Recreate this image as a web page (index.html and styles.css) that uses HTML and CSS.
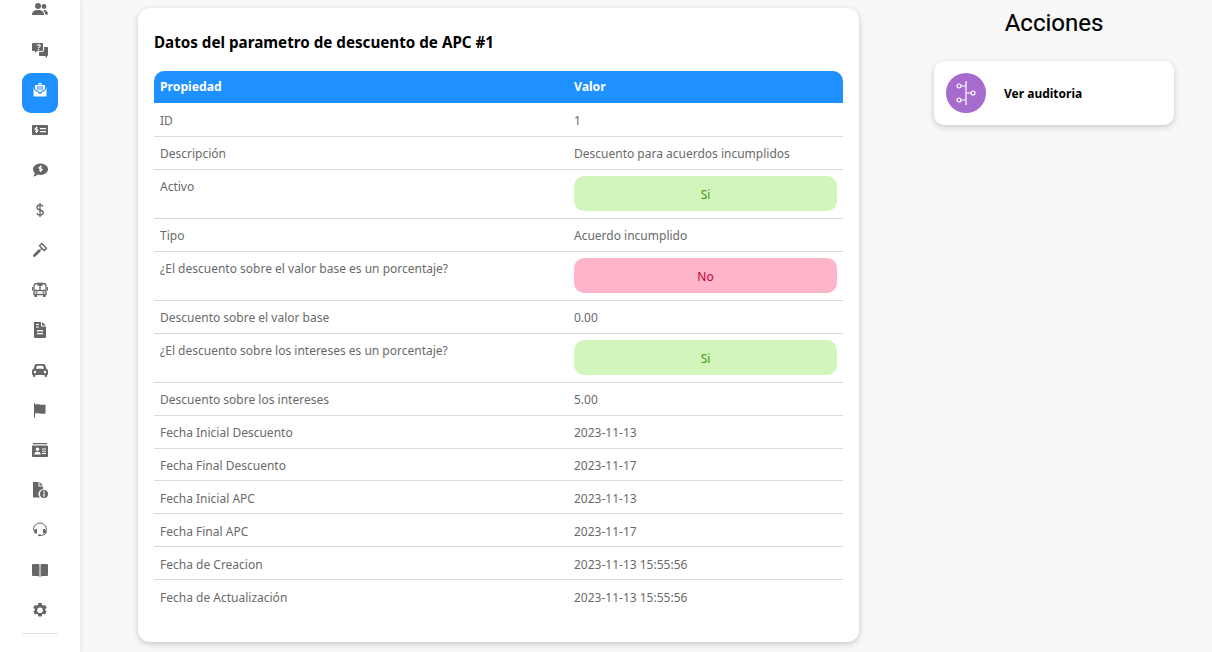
FILE: index.html
```html
<!DOCTYPE html>
<html lang="es">
<head>
    <meta charset="UTF-8">
    <meta name="viewport" content="width=device-width, initial-scale=1.0">
    <title>Parametro de descuento de APC</title>
    <link rel="stylesheet" href="styles.css">
</head>
<body>
    <div class="layout">
        <nav class="sidebar">
            <ul class="side-list">
                <li class="side-item"><svg viewBox="0 0 16 16"><circle cx="6" cy="4" r="3"/><circle cx="12" cy="4.500" r="2.400"/><path d="M0 13c0-3.500 2-5 6-5s6 1.500 6 5z"/><path d="M11 8c3-.5 5 1 5 4.500h-3c0-2-.7-3.500-2-4.500z"/></svg></li>
                <li class="side-item"><svg viewBox="0 0 16 16"><path fill-rule="evenodd" d="M1 1h9a1 1 0 0 1 1 1v6a1 1 0 0 1-1 1H5l-2 2V9H1a1 1 0 0 1-1-1V2a1 1 0 0 1 1-1zm3.500 2.800h1.200c0-.8 1.900-.9 1.800.1 0 .7-1.700 1-1.700 2.300h1.300c0-.9 1.800-1.200 1.700-2.700C8.700 1.600 4.500 1.700 4.500 3.800zM5.800 7v1.200h1.400V7z"/><path d="M12 5h3a1 1 0 0 1 1 1v7a1 1 0 0 1-1 1v2l-2-2H8a1 1 0 0 1-1-1v-3h3a2 2 0 0 0 2-2z"/></svg></li>
                <li class="side-item active"><svg viewBox="0 0 16 16"><path d="M8 .5l2.500 2h-5z"/><path d="M3 3h10v4L8 10.500 3 7z"/><path d="M1.500 6L2 5.600v2L8 12l6-4.400v-2l.5.4v7.500a1 1 0 0 1-1 1h-11a1 1 0 0 1-1-1z"/><path class="cut" d="M5 4.500h6v1H5zM5 6.500h6v1H5z"/></svg></li>
                <li class="side-item"><svg viewBox="0 0 16 16"><path fill-rule="evenodd" d="M1 3h14a1 1 0 0 1 1 1v8a1 1 0 0 1-1 1H1a1 1 0 0 1-1-1V4a1 1 0 0 1 1-1zm7 3v1.300h6V6zm0 3v1.300h6V9zM4 4.500v1c-2 .3-2 2.500-.2 2.800 1.200.2 1 1-.8.600v1l1 .2v1h1v-1c2-.4 1.800-2.600 0-2.900-1-.2-1-1 .8-.6v-1l-.8-.1v-1z"/></svg></li>
                <li class="side-item"><svg viewBox="0 0 16 16"><path fill-rule="evenodd" d="M8.500 1.500C12.600 1.500 16 4 16 7.300S12.600 13 8.500 13c-1 0-2-.2-2.800-.5C4.500 13.500 3 14.500 1 14.500c1-1 1.700-2.200 1.900-3.300C1.700 10.200 1 8.800 1 7.300 1 4 4.400 1.500 8.500 1.500zM8 3.500v1c-2 .3-2 2.500-.2 2.800 1.200.2 1 1-.8.600v1l1 .2v1h1.200v-1c2-.4 1.800-2.600 0-2.900-1-.2-1-1 .8-.6v-1l-.8-.1v-1z"/></svg></li>
                <li class="side-item"><svg viewBox="0 0 16 16"><path class="line" d="M8 1v14M11 4.500C10.600 3.300 9.500 3 8 3 6.300 3 5 3.800 5 5.500S6.300 7.600 8 8s3.200 1 3.200 2.700S9.800 13 8 13c-1.700 0-2.800-.5-3.200-1.800"/></svg></li>
                <li class="side-item"><svg viewBox="0 0 16 16"><path class="line" d="M9.800 1.500l4.700 4.700-2.300 2.300-4.700-4.700zM8.500 6.800l1 1"/><path d="M7 7l2 2-5.500 5.500a1.400 1.400 0 0 1-2-2z"/></svg></li>
                <li class="side-item"><svg viewBox="0 0 16 16"><path class="line" d="M4.500 1.500h7a2.500 2.500 0 0 1 2.500 2.500v8.500H2V4a2.500 2.500 0 0 1 2.500-2.500zM2 8.500h12M8 3.500v5M5.500 3h5"/><path d="M2.500 12.500h2.500V15h-2.500zM11 12.500h2.500V15H11z"/><circle cx="4.500" cy="10.500" r="1"/><circle cx="11.500" cy="10.500" r="1"/><path d="M0 5h1v3.500H0zM15 5h1v3.500h-1z"/></svg></li>
                <li class="side-item"><svg viewBox="0 0 16 16"><path fill-rule="evenodd" d="M2 0h7v4.500h5V15a1 1 0 0 1-1 1H3a1 1 0 0 1-1-1zm2 2v1h3V2zm0 2.500v1h3v-1zm1 3.500v1.500h6V8zm0 3v1.300h6V11z"/><path d="M10 0l4 3.500h-4z"/></svg></li>
                <li class="side-item"><svg viewBox="0 0 16 16"><path fill-rule="evenodd" d="M4.500 2h7c.8 0 1.400.5 1.700 1.200L14.500 7c1 .4 1.500 1.200 1.500 2.200V12a1 1 0 0 1-1 1v1a1 1 0 0 1-2.300 0v-1H3.300v1A1 1 0 0 1 1 14v-1a1 1 0 0 1-1-1V9.200C0 8.200.5 7.400 1.500 7l1.300-3.800C3.100 2.500 3.700 2 4.500 2zM5 3.700L4 6.800h8l-1-3.100zM3 8.800a1.200 1.200 0 1 0 0 2.400 1.200 1.200 0 0 0 0-2.400zm10 0a1.200 1.200 0 1 0 0 2.400 1.200 1.200 0 0 0 0-2.400z"/></svg></li>
                <li class="side-item"><svg viewBox="0 0 16 16"><path d="M2 1h1v14.500H2z"/><path d="M3 2.500c4-1 6 1 10.500 0v9C9 12.500 7 10.500 3 11.500z"/></svg></li>
                <li class="side-item"><svg viewBox="0 0 16 16"><path fill-rule="evenodd" d="M1 1h14v1.200H1zM1 3.500h14a1 1 0 0 1 1 1V14a1 1 0 0 1-1 1H1a1 1 0 0 1-1-1V4.500a1 1 0 0 1 1-1zm4.500 2a1.800 1.800 0 1 0 0 3.600 1.800 1.800 0 0 0 0-3.600zM2.300 12.500h6.400c0-1.800-1-2.800-3.200-2.800s-3.200 1-3.200 2.800zM10 6.500v1h4v-1zm0 2.300v1h4v-1zm0 2.300v1h4v-1z"/></svg></li>
                <li class="side-item"><svg viewBox="0 0 16 16"><path d="M1 0h5.500v4.500H11v2.700a4.800 4.800 0 0 0-3 8.300H1z"/><path d="M7.500 0L11 3.500H7.500z"/><path fill-rule="evenodd" d="M12 8a4 4 0 1 1 0 8 4 4 0 0 1 0-8zm-.7 1.200v1.500h1.400V9.200zm0 2.200v3.400h1.400v-3.400z"/></svg></li>
                <li class="side-item"><svg viewBox="0 0 16 16"><path class="line thin" d="M1.500 8.500V7.500a6.500 6.500 0 0 1 13 0v1M14.500 8.500c0 3-2 4.800-5 4.800H8"/><path d="M4 7h1v4.500H4A2 2 0 0 1 2 9.500V9a2 2 0 0 1 2-2zM11 7h1a2 2 0 0 1 2 2v.5a2 2 0 0 1-2 2h-1z"/><ellipse cx="7.500" cy="13.300" rx="1.500" ry="1"/></svg></li>
                <li class="side-item"><svg viewBox="0 0 16 16"><path d="M1 2h5c1 0 1.500.5 1.500 1.500V15L6 14H1a1 1 0 0 1-1-1V3a1 1 0 0 1 1-1z"/><path d="M15 2h-5c-1 0-1.500.5-1.500 1.500V15l1.500-1h5a1 1 0 0 0 1-1V3a1 1 0 0 0-1-1z"/></svg></li>
                <li class="side-item"><svg viewBox="0 0 16 16"><path fill-rule="evenodd" d="M6.300.5h3.400l.4 2 1 .6 1.900-.7 1.700 2.900-1.500 1.300v1.200l1.500 1.300-1.700 2.900-1.900-.7-1 .6-.4 2H6.300l-.4-2-1-.6-1.900.7-1.700-2.900 1.500-1.300V6.600L1.300 5.300 3 2.400l1.900.7 1-.6zM8 5a2.800 2.800 0 1 0 0 5.600A2.800 2.800 0 0 0 8 5z" transform="translate(0 .5)"/></svg></li>
            </ul>
            <hr class="side-line">
        </nav>

        <main class="content">
            <section class="card">
                <h2 class="card-title">Datos del parametro de descuento de APC #1</h2>
                <table class="data-table">
                    <thead>
                        <tr><th>Propiedad</th><th>Valor</th></tr>
                    </thead>
                    <tbody>
                        <tr class="first-row"><td>ID</td><td>1</td></tr>
                        <tr><td>Descripción</td><td>Descuento para acuerdos incumplidos</td></tr>
                        <tr><td>Activo</td><td class="tag-cell"><div class="tag tag-yes">Si</div></td></tr>
                        <tr><td>Tipo</td><td>Acuerdo incumplido</td></tr>
                        <tr><td>¿El descuento sobre el valor base es un porcentaje?</td><td class="tag-cell"><div class="tag tag-no">No</div></td></tr>
                        <tr><td>Descuento sobre el valor base</td><td>0.00</td></tr>
                        <tr><td>¿El descuento sobre los intereses es un porcentaje?</td><td class="tag-cell"><div class="tag tag-yes">Si</div></td></tr>
                        <tr><td>Descuento sobre los intereses</td><td>5.00</td></tr>
                        <tr><td>Fecha Inicial Descuento</td><td>2023-11-13</td></tr>
                        <tr><td>Fecha Final Descuento</td><td>2023-11-17</td></tr>
                        <tr><td>Fecha Inicial APC</td><td>2023-11-13</td></tr>
                        <tr><td>Fecha Final APC</td><td>2023-11-17</td></tr>
                        <tr><td>Fecha de Creacion</td><td>2023-11-13 15:55:56</td></tr>
                        <tr class="last-row"><td>Fecha de Actualización</td><td>2023-11-13 15:55:56</td></tr>
                    </tbody>
                </table>
            </section>

            <aside class="actions">
                <h1 class="actions-title">Acciones</h1>
                <div class="action-card">
                    <span class="action-icon">
                        <svg viewBox="0 0 24 24"><path d="M12 0v24M12 12h5M12 5H7M12 19H7"/><circle cx="5" cy="5" r="2"/><circle cx="5" cy="19" r="2"/><circle cx="19" cy="12" r="2"/></svg>
                    </span>
                    <span class="action-label">Ver auditoria</span>
                </div>
            </aside>
        </main>
    </div>
</body>
</html>
```

FILE: styles.css
```css
html, body {
    height: 100%;
}
body {
    margin: 0;
    overflow: hidden;
    font-family: 'Noto Sans', sans-serif;
    background-color: #f8f8f8;
}
.layout {
    display: flex;
    height: 652px;
    overflow: hidden;
}

/* barra lateral */
.sidebar {
    width: 80px;
    flex-shrink: 0;
    background: white;
    box-shadow: 2px 0 5px rgba(0,0,0,0.06);
    display: flex;
    flex-direction: column;
    align-items: center;
}
.side-list {
    list-style: none;
    margin: -10px 0 0 0;
    padding: 0;
}
.side-item {
    width: 36px;
    height: 40px;
    display: flex;
    align-items: center;
    justify-content: center;
    border-radius: 9px;
}
.side-item svg {
    width: 16px;
    height: 16px;
    fill: #666;
}
.side-item .line {
    fill: none;
    stroke: #666;
    stroke-width: 1.3;
}
.side-item .thin {
    stroke-width: 1;
}
.side-item.active {
    margin-top: 3px;
    margin-bottom: -3px;
    background-color: #1e90ff;
}
.side-item.active svg {
    margin-bottom: 6px;
    fill: white;
}
.side-item.active .cut {
    fill: #1e90ff;
}
.side-line {
    width: 36px;
    margin: 3px 0 0 0;
    border: none;
    border-top: 1px solid #e4e4e0;
}

/* contenido */
.content {
    flex: 1;
    display: flex;
    align-items: flex-start;
    padding: 8px 38px 0 58px;
}
.card {
    width: 721px;
    height: 634px;
    box-sizing: border-box;
    flex-shrink: 0;
    padding: 16px;
    background: white;
    border-radius: 12px;
    box-shadow: 0 2px 6px rgba(0,0,0,0.2);
}
.card-title {
    margin: 8px 0 19px 0;
    font-size: 15.2px;
    line-height: 20px;
    font-weight: 700;
    color: black;
}
.data-table {
    width: 689px;
    table-layout: fixed;
    border-collapse: separate;
    border-spacing: 0;
    font-size: 12px;
    line-height: 19.9px;
    color: #6a6a6a;
}
.data-table th:first-child,
.data-table td:first-child {
    width: 402px;
}
.data-table th {
    padding: 6px;
    height: 20px;
    text-align: left;
    font-size: 12.2px;
    line-height: 20px;
    font-weight: 700;
    color: white;
    background-color: #1e90ff;
}
.data-table th:first-child {
    border-top-left-radius: 10px;
}
.data-table th:last-child {
    border-top-right-radius: 10px;
}
.data-table td {
    padding: 7.5px 6px 4.5px 6px;
    vertical-align: top;
    border-bottom: 1px solid #d9d9d9;
}
.data-table .first-row td {
    padding-top: 8.45px;
    padding-bottom: 4.65px;
}
.data-table .tag-cell {
    padding: 6px;
}
.data-table .last-row td {
    border-bottom: none;
}
.tag {
    height: 35px;
    padding-top: 3px;
    box-sizing: border-box;
    margin-bottom: 1px;
    border-radius: 10px;
    display: flex;
    align-items: center;
    justify-content: center;
}
.tag-yes {
    background-color: #d2f5bb;
    color: #3f9a12;
}
.tag-no {
    background-color: #ffb5c9;
    color: #cc0033;
}

/* acciones */
.actions {
    width: 240px;
    margin-left: 75px;
    flex-shrink: 0;
}
.actions-title {
    margin: 0 0 23px 0;
    font-family: 'Roboto', sans-serif;
    font-size: 24px;
    line-height: 30px;
    font-weight: 400;
    text-align: center;
    color: black;
    -webkit-text-stroke: 0.2px black;
}
.action-card {
    height: 64px;
    padding: 0 12px;
    box-sizing: border-box;
    display: flex;
    align-items: center;
    gap: 18px;
    background: white;
    border-radius: 10px;
    box-shadow: 0 2px 6px rgba(0,0,0,0.2);
}
.action-icon {
    width: 40px;
    height: 40px;
    border-radius: 50%;
    background-color: #a66bcc;
    display: flex;
    align-items: center;
    justify-content: center;
}
.action-icon svg {
    width: 24px;
    height: 24px;
    fill: none;
    stroke: white;
    stroke-width: 1.2;
}
.action-label {
    font-size: 12px;
    font-weight: 700;
    color: black;
}
```
